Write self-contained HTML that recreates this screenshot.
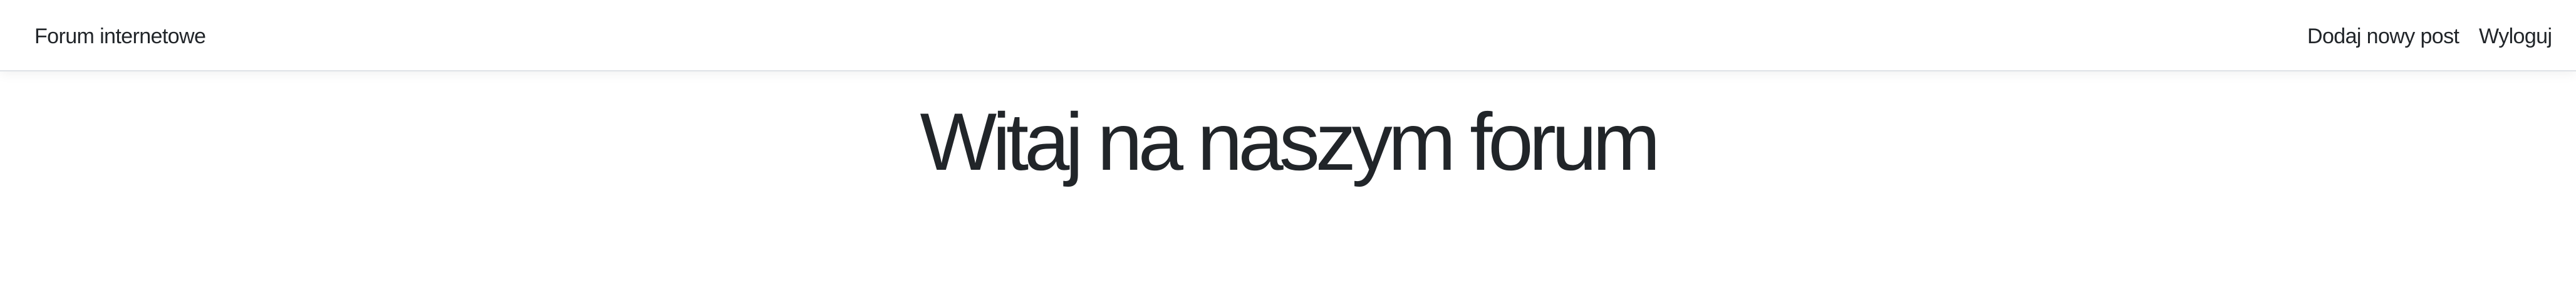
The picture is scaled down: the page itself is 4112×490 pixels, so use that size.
<!DOCTYPE html>
<html><head><meta charset="utf-8"><style>
html,body{margin:0;padding:0;width:4112px;height:490px;background:#fff;overflow:hidden;font-family:"Liberation Sans",Arial,sans-serif;color:#212529}
.nav{position:absolute;left:0;top:0;width:4112px;height:112px;background:#fff;border-bottom:2px solid #dee2e6;box-shadow:0 4px 18px rgba(0,0,0,0.06)}
.t{position:absolute;font-size:34px;letter-spacing:-0.6px;line-height:1;white-space:nowrap}
h1{position:absolute;margin:0;left:0;width:4112px;text-align:center;top:161px;font-size:130px;font-weight:normal;letter-spacing:-7px;line-height:1;white-space:nowrap;color:#212529}
</style></head><body>
<div class="nav">
<div class="t" style="left:55px;top:41px">Forum internetowe</div>
<div class="t" style="left:3683px;top:41px">Dodaj nowy post</div>
<div class="t" style="left:3957px;top:41px">Wyloguj</div>
</div>
<h1>Witaj na naszym forum</h1>
</body></html>
